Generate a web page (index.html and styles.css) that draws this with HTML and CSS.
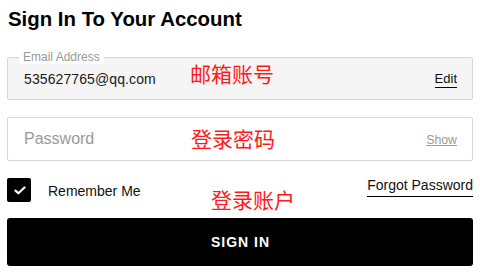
FILE: index.html
```html
<!DOCTYPE html>
<html lang="en">
<head>
<meta charset="utf-8">
<title>Sign In</title>
<link rel="stylesheet" href="styles.css">
</head>
<body>
<div class="page">
  <h1 class="title">Sign In To Your Account</h1>

  <div class="field field-email">
    <span class="field-label">Email Address</span>
    <span class="field-value">535627765@qq.com</span>
    <a class="edit-link" href="#">Edit</a>
  </div>

  <div class="field field-password">
    <span class="placeholder">Password</span>
    <a class="show-link" href="#">Show</a>
  </div>

  <div class="options">
    <label class="remember">
      <span class="checkbox">
        <svg width="12" height="9" viewBox="0 0 12 9"><path d="M1.5 4.6 L4.4 7.3 L10.5 1.5" fill="none" stroke="#fff" stroke-width="2.2" stroke-linecap="round" stroke-linejoin="round"/></svg>
      </span>
      <span class="remember-text">Remember Me</span>
    </label>
    <a class="forgot-link" href="#">Forgot Password</a>
  </div>

  <button class="signin-btn" type="button">SIGN IN</button>

  <span class="note note-email">邮箱账号</span>
  <span class="note note-password">登录密码</span>
  <span class="note note-login">登录账户</span>
</div>
</body>
</html>
```

FILE: styles.css
```css
* { box-sizing: border-box; }

html, body {
  margin: 0;
  padding: 0;
  background: #fff;
}

body {
  font-family: "Liberation Sans", Arial, sans-serif;
  color: #111;
}

.page {
  position: relative;
  width: 480px;
  padding: 0 7px;
}

.title {
  margin: 8px 0 0 1px;
  font-size: 20.4px;
  line-height: 23px;
  font-weight: bold;
  color: #000;
}

.field {
  position: relative;
  display: flex;
  align-items: center;
  border: 1px solid #d6d6d6;
  border-radius: 2px;
  padding: 0 15px 0 16px;
}

.field-email {
  margin-top: 26px;
  height: 43px;
  background: #f5f5f5;
}

.field-label {
  position: absolute;
  top: -8px;
  left: 11px;
  padding: 0 4px;
  background: #fff;
  font-size: 12px;
  line-height: 14px;
  color: #999;
}

.field-value {
  font-size: 14px;
  color: #1a1a1a;
  padding-top: 1px;
  letter-spacing: 0.1px;
}

.edit-link {
  margin-left: auto;
  display: inline-block;
  font-size: 13px;
  line-height: 14px;
  padding-bottom: 1px;
  color: #111;
  text-decoration: none;
  border-bottom: 1px solid #000;
  margin-top: 3px;
}

.field-password {
  margin-top: 17px;
  height: 44px;
  background: #fff;
}

.placeholder {
  font-size: 16px;
  color: #9a9a9a;
}

.show-link {
  margin-left: auto;
  font-size: 12.3px;
  color: #999;
  text-decoration: underline;
  margin-top: 2px;
}

.options {
  display: flex;
  justify-content: space-between;
  align-items: flex-start;
  margin-top: 17px;
}

.remember {
  display: flex;
  align-items: center;
  gap: 17px;
}

.checkbox {
  width: 24px;
  height: 24px;
  background: #000;
  border-radius: 2px;
  display: flex;
  align-items: center;
  justify-content: center;
}

.checkbox svg {
  display: block;
  margin-top: 1px;
  margin-left: 1px;
}

.remember-text {
  font-size: 14px;
  line-height: 16px;
  color: #111;
  padding-top: 1px;
}

.forgot-link {
  display: inline-block;
  font-size: 14px;
  line-height: 16px;
  padding-bottom: 3px;
  margin-top: -1px;
  color: #111;
  text-decoration: none;
  border-bottom: 1px solid #000;
}

.signin-btn {
  display: block;
  width: 100%;
  height: 48px;
  margin-top: 16px;
  border: 0;
  border-radius: 3px;
  background: #000;
  color: #fff;
  font-family: "Liberation Sans", Arial, sans-serif;
  font-size: 14px;
  font-weight: bold;
  letter-spacing: 1px;
  text-indent: 1px;
}

.note {
  position: absolute;
  font-family: "Noto Sans CJK SC", sans-serif;
  font-size: 21px;
  line-height: 21px;
  color: #ff1a1a;
  white-space: nowrap;
}

.note-email { left: 190px; top: 55px; }
.note-password { left: 191px; top: 120px; }
.note-login { left: 211px; top: 181px; }
```
